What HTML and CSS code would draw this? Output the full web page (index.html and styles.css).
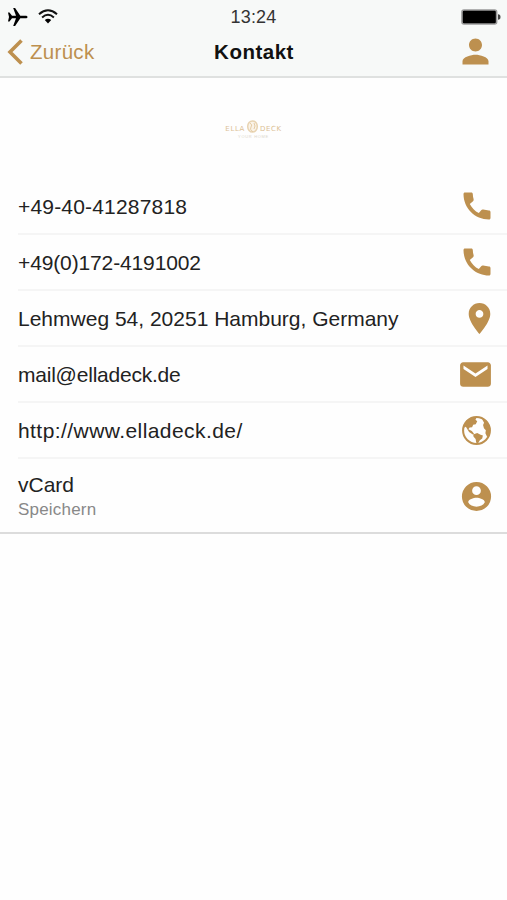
FILE: index.html
```html
<!DOCTYPE html>
<html lang="de">
<head>
<meta charset="utf-8">
<title>Kontakt</title>
<link rel="stylesheet" href="styles.css">
</head>
<body>
<header class="header">
  <div class="status">
    <div class="signals">
      <svg width="20" height="18" viewBox="0 0 20 18"><path d="M0 4.5h1.5L4 7.7h4L5.2 0h1.9l5.2 7.7h5.2c2.7 0 2.7 2.6 0 2.6h-5.2L7.1 18H5.2L8 10.3H4l-2.5 3.2H0L1 9z"/></svg>
      <svg width="20" height="15" viewBox="0 0 20 15"><path d="M1 5.2Q10-2.6 19 5.2M4.1 8.4Q10 3.2 15.9 8.4" fill="none" stroke="#111" stroke-width="2"/><path d="M6.8 10.9Q10 8.7 13.2 10.9L10 14.5z"/></svg>
    </div>
    <time class="clock">13:24</time>
    <svg class="battery" width="40" height="16" viewBox="0 0 40 16"><rect x="1" y="1" width="34.6" height="14" rx="2" fill="#000" stroke="#999" stroke-width="1.6"/><path d="M37 5.2q2.5 0 2.5 2.8T37 10.8z" fill="#444"/></svg>
  </div>
  <nav class="nav">
    <a class="back"><svg width="16" height="26" viewBox="0 0 16 26"><path d="M14.5 1.5 3 13l11.5 11.5" fill="none" stroke="currentColor" stroke-width="3.6"/></svg><span>Zurück</span></a>
    <h1 class="title">Kontakt</h1>
    <svg class="person" width="39" height="39" viewBox="0 0 24 24"><path d="M12 12c2.21 0 4-1.79 4-4s-1.79-4-4-4-4 1.79-4 4 1.79 4 4 4zm0 2c-2.67 0-8 1.34-8 4v2h16v-2c0-2.66-5.33-4-8-4z"/></svg>
  </nav>
</header>
<main>
  <div class="brand">
    <div class="brand-name"><span>ELLA</span><svg width="13" height="15" viewBox="0 0 13 15"><ellipse cx="6.5" cy="6.5" rx="4.8" ry="5.6" fill="#faf3e8" stroke="#e8d3b1" stroke-width="1.5"/><path d="M4 3q3 2 1 4t2 5M8 3q2 3 0 6" fill="none" stroke="#e5cca5"/></svg><span>DECK</span></div>
    <div class="brand-sub">YOUR HOME</div>
  </div>
  <ul class="list">
    <li class="row"><span class="label phone">+49-40-41287818</span><svg class="icon handset" width="36" height="36" viewBox="0 0 24 24"><path d="M7.2 10.6c1.4 2.6 3.4 4.7 6 6.1l1.6-1.9c.35-.4.8-.5 1.3-.4 1.2.35 2.6.55 3.9.6.6 0 1 .4 1 1V20c0 .6-.4 1-1 1C10.6 21 3 13.4 3 4c0-.6.4-1 1-1h4.2c.6 0 1 .4 1 1 .05 1.2.2 2.4.55 3.5.15.5 0 .95-.4 1.25z"/></svg></li>
    <li class="row"><span class="label mobile">+49(0)172-4191002</span><svg class="icon handset" width="36" height="36" viewBox="0 0 24 24"><path d="M7.2 10.6c1.4 2.6 3.4 4.7 6 6.1l1.6-1.9c.35-.4.8-.5 1.3-.4 1.2.35 2.6.55 3.9.6.6 0 1 .4 1 1V20c0 .6-.4 1-1 1C10.6 21 3 13.4 3 4c0-.6.4-1 1-1h4.2c.6 0 1 .4 1 1 .05 1.2.2 2.4.55 3.5.15.5 0 .95-.4 1.25z"/></svg></li>
    <li class="row"><span class="label">Lehmweg 54, 20251 Hamburg, Germany</span><svg class="icon pin" width="37" height="37" viewBox="0 0 24 24"><path d="M12 2C8.13 2 5 5.13 5 9c0 5.25 7 13 7 13s7-7.75 7-13c0-3.87-3.13-7-7-7zm0 9.5c-1.38 0-2.5-1.12-2.5-2.5s1.12-2.5 2.5-2.5 2.5 1.12 2.5 2.5-1.12 2.5-2.5 2.5z"/></svg></li>
    <li class="row"><span class="label mail">mail@elladeck.de</span><svg class="icon" width="37" height="37" viewBox="0 0 24 24"><path d="M20 4H4c-1.1 0-2 .9-2 2v12c0 1.1.9 2 2 2h16c1.1 0 2-.9 2-2V6c0-1.1-.9-2-2-2zm-.2 4.5L12 13.7 4.2 8.5V6.2l7.8 5.2 7.8-5.2z"/></svg></li>
    <li class="row"><span class="label url">http://www.elladeck.de/</span><svg class="icon" width="35" height="35" viewBox="0 0 24 24"><circle cx="12" cy="12" r="9.2" fill="none" stroke="#bd904f" stroke-width="1.4"/><path d="M5.2 5.2 9.5 2.8l2.6.3-.8 1.5 1.2 1.1-1 2-1.8.3-.7 1.7-1.7.3-.8 1.1 2.3 1.3 1.5 1.9-.8.4-2.6-1.6L4.7 9.5l-1.7.8zM15.5 3.2l3.8 2.6 2.1 4.7-.4 4.2-1.6 2-1.3-2.8.3-2.1-1.3-1.3-.6-2.3.7-1.5-.8-1.4zM9.7 14.7l2.8-1 2.3 1.2 1.6.5-.5 2-1.6 1.3-1.2 2-1.3-.3-.4-2.6-1.4-1.5z"/></svg></li>
    <li class="row card"><span class="label">vCard<small class="hint">Speichern</small></span><svg class="icon" width="35" height="35" viewBox="0 0 24 24"><path fill-rule="evenodd" d="M12 2a10 10 0 1 0 0 20 10 10 0 0 0 0-20zm0 3a3 3 0 1 1 0 6 3 3 0 0 1 0-6zm0 14c-2.5 0-4.7-1-5.7-3 .03-2 3.7-3.1 5.7-3.1s5.67 1.1 5.7 3.1c-1 2-3.2 3-5.7 3z"/></svg></li>
  </ul>
</main>
</body>
</html>
```
FILE: styles.css
```css
* { box-sizing: border-box; }
body {
  margin: 0;
  background: #fefefe;
  color: #222;
  font-family: "Liberation Sans", Arial, sans-serif;
}
svg { display: block; flex: none; }
.header {
  height: 78px;
  background: #f7f9f8;
  border-bottom: 2px solid #dfe1e0;
}
.status {
  display: grid;
  grid-template-columns: 1fr auto 1fr;
  align-items: center;
  height: 32px;
  padding: 1px 6px 0 8px;
}
.signals { display: flex; align-items: center; gap: 10px; }
.clock { padding: 2px 2px 0 0; font-size: 18px; letter-spacing: .2px; color: #333; }
.battery { justify-self: end; }
.nav {
  display: grid;
  grid-template-columns: 1fr auto 1fr;
  align-items: center;
  height: 39px;
  padding: 0 12px 0 7px;
  color: #bd904f;
}
.back { display: flex; align-items: center; gap: 7px; font-size: 20.5px; letter-spacing: .3px; }
.title {
  margin: 0;
  padding-left: 6px;
  color: #111;
  font-size: 20.5px;
  letter-spacing: .5px;
}
.person { justify-self: end; fill: #bd904f; }
.brand {
  display: flex;
  flex-direction: column;
  align-items: center;
  height: 101px;
  padding-top: 43px;
  color: #dcc096;
}
.brand-name {
  display: flex;
  align-items: center;
  gap: 1px;
  height: 13px;
  font: 7px/9px "DejaVu Sans", sans-serif;
  letter-spacing: .6px;
}
.brand-name span { padding-top: 3px; }
.brand-sub { color: #dcd6ca; font-size: 4px; line-height: 5px; letter-spacing: .7px; }
.list {
  margin: 0;
  padding: 0 0 0 18px;
  list-style: none;
  border-bottom: 2px solid #dcdcdc;
}
.row {
  display: flex;
  align-items: center;
  justify-content: space-between;
  height: 56.1px;
  padding-right: 13px;
  border-bottom: 2px solid #f5f5f5;
}
.card { height: 72.5px; padding-top: 1px; border-bottom: 0; }
.label { padding-top: 1px; font-size: 21px; line-height: 26px; white-space: nowrap; }
.phone { letter-spacing: .18px; }
.mobile { letter-spacing: -.13px; }
.mail { letter-spacing: -.22px; }
.url { letter-spacing: .43px; }
.icon { fill: #bd904f; }
.handset { margin-right: -1px; }
.pin { margin-right: -4px; }
.hint {
  display: block;
  color: #888;
  font-size: 17px;
  line-height: 23px;
  letter-spacing: .2px;
}
```
